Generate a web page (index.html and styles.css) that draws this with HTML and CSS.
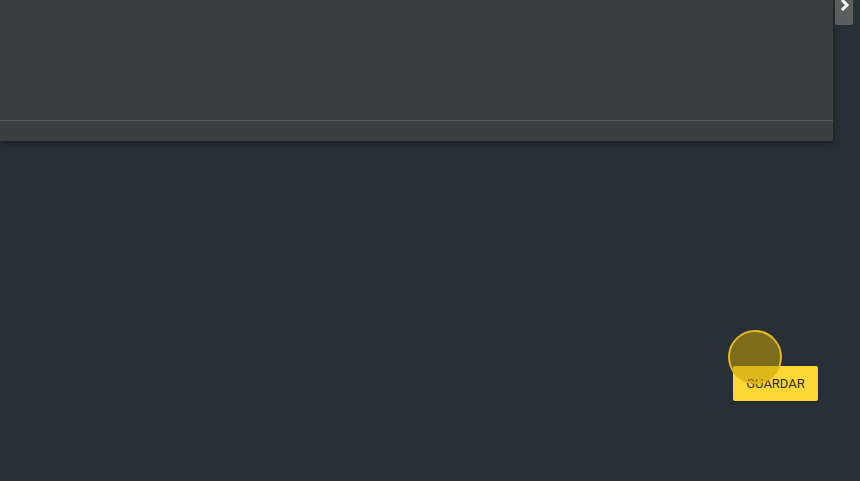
FILE: index.html
```html
<!DOCTYPE html>
<html lang="es">
<head>
  <meta charset="UTF-8" />
  <meta name="viewport" content="width=device-width, initial-scale=1.0"/>
  <title>Guardar</title>
  <link rel="stylesheet" href="styles.css">
</head>
<body>

<div class="top">
  <div class="panel">
    <div class="panel-body"></div>
    <div class="panel-footer"></div>
  </div>
  <div class="side-tab">
    <svg width="10" height="12" viewBox="0 0 10 12">
      <path d="M2 0 L7 5 L2 10" fill="none" stroke="#fff" stroke-width="3"/>
    </svg>
  </div>
</div>

<div class="actions">
  <button class="save-btn">GUARDAR</button>
  <span class="click-mark"></span>
</div>

</body>
</html>
```

FILE: styles.css
```css
body {
  margin: 0;
  height: 481px;
  background: #263036;
  font-family: Roboto, 'Liberation Sans', sans-serif;
  overflow: hidden;
}

.top {
  display: flex;
  align-items: flex-start;
}

.panel {
  width: 833px;
  background: #3c3f3f;
  box-shadow: 0 2px 6px rgba(0, 0, 0, 0.45);
}

.panel-body {
  height: 120px;
  border-bottom: 1px solid #5a5d5d;
}

.panel-footer {
  height: 20px;
}

.side-tab {
  width: 18px;
  height: 25px;
  margin-left: 2px;
  background: #5b5e5f;
  border-radius: 0 0 2px 2px;
  box-sizing: border-box;
  padding: 0 0 0 5px;
}

.side-tab svg {
  display: block;
}

.actions {
  position: relative;
  display: flex;
  justify-content: flex-end;
  padding: 225px 42px 0 0;
}

.save-btn {
  width: 85px;
  height: 35px;
  border: none;
  border-radius: 2px;
  background: #fdd835;
  color: #2b2b2b;
  font-family: Roboto, 'Liberation Sans', sans-serif;
  font-size: 13px;
  padding: 0;
  box-shadow: 0 1px 2px rgba(0, 0, 0, 0.3);
}

.click-mark {
  position: absolute;
  left: 728px;
  top: 189px;
  width: 50px;
  height: 50px;
  border-radius: 50%;
  border: 2px solid #e2b620;
  background: rgba(196, 158, 4, 0.55);
}
```
